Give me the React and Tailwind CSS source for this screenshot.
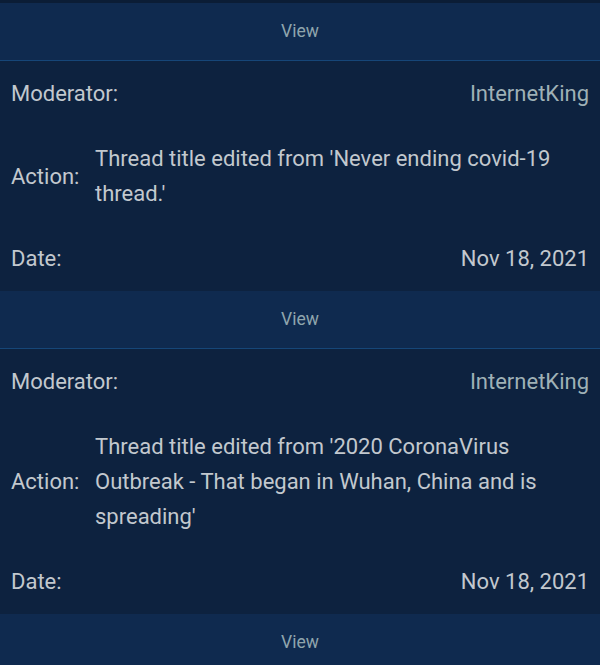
const ENTRIES = [
  {
    moderator: 'InternetKing',
    action: "Thread title edited from 'Never ending covid-19 thread.'",
    date: 'Nov 18, 2021',
  },
  {
    moderator: 'InternetKing',
    action: "Thread title edited from '2020 CoronaVirus Outbreak - That began in Wuhan, China and is spreading'",
    date: 'Nov 18, 2021',
  },
]

export default function App() {
  return (
    <div className="w-[600px] h-[665px] overflow-hidden bg-[#0d223f]" style={{ fontFamily: 'Roboto, "Noto Sans", sans-serif' }}>
      <div className="h-[3px] bg-[#0b1d36]" />
      <ViewBar />
      {ENTRIES.map((e, i) => (
        <div key={i}>
          <LogCard entry={e} />
          <ViewBar />
        </div>
      ))}
    </div>
  )
}

function ViewBar() {
  return (
    <div className="h-[58px] flex items-center justify-center bg-[#0f2a4f] border-b border-[#164678] text-[17.5px] text-[#8fa5ad]">
      View
    </div>
  )
}

function LogCard({ entry }) {
  return (
    <div className="bg-[#0d223f] px-[11px] text-[22px] leading-[35px] text-[#c2c8ce]">
      <div className="flex items-center justify-between py-[15px]">
        <span>Moderator:</span>
        <span className="text-[#9fb1b6]">{entry.moderator}</span>
      </div>
      <div className="flex items-center py-[15px]">
        <span className="w-[84px] shrink-0">Action:</span>
        <span className="flex-1">{entry.action}</span>
      </div>
      <div className="flex items-center justify-between py-[15px]">
        <span>Date:</span>
        <span>{entry.date}</span>
      </div>
    </div>
  )
}
